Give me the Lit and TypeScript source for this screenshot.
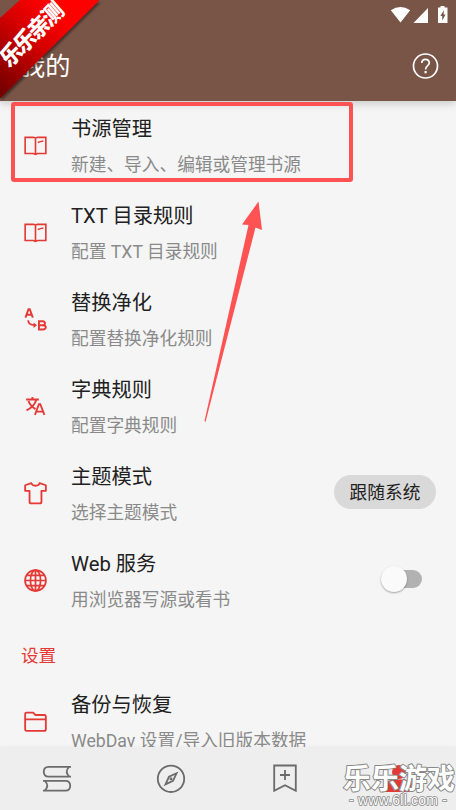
import { LitElement, html, svg, css, nothing } from "lit";
import { customElement, property } from "lit/decorators.js";

const icons: Record<string, unknown> = {
  book: svg`<path d="M12 4.2 10 3.5H1.2V20.3H9.8L12 21.3 14.2 20.3H22.8V3.5H14L12 4.2V21" fill="none" stroke="currentColor" stroke-width="1.7"/><path d="M14.4 8.8Q17 8 20.2 7.4" fill="none" stroke="currentColor" stroke-width="1.6"/>`,
  replace: svg`<path d="M1.5 10 4.7 1.2H6L9.2 10M3 7H7.8" fill="none" stroke="currentColor" stroke-width="2"/><path d="M4.3 12.8C4.5 16 7 17.9 11 17.9" fill="none" stroke="currentColor" stroke-width="1.8"/><path d="M10 15 13.6 17.9 10 20.8Z" fill="currentColor"/><path d="M15.6 13.9H19.4C23 13.9 22.5 18 19.5 18 23.8 18 23.7 22.4 19.8 22.4H15.6ZM16 18H20" fill="none" stroke="currentColor" stroke-width="2"/>`,
  translate: svg`<path d="M2.2 4.7H15.5M8.8 2V4.7M4.7 6.2C6.2 10.5 9 12.8 12 14.7M12.9 5C11.2 10.5 7 14 2.6 16" fill="none" stroke="currentColor" stroke-width="2"/><path d="M11.4 20.8 15.6 9.6H17L21.3 20.8M12.8 17.3H19.8" fill="none" stroke="currentColor" stroke-width="1.9"/>`,
  shirt: svg`<path d="M7.7 1.2 1.2 3.4V9.2H5.8V20.5Q5.8 22.3 7.6 22.3H16.4Q18.2 22.3 18.2 20.5V9.2H22.8V3.4L16.3 1.2C15.4 4.8 8.6 4.8 7.7 1.2Z" fill="none" stroke="currentColor" stroke-width="1.9" stroke-linejoin="round"/>`,
  globe: svg`<g fill="none" stroke="currentColor" stroke-width="1.8"><circle cx="12" cy="12" r="10.9"/><ellipse cx="12" cy="12" rx="5.3" ry="10.9"/><path d="M12 1V23M1 12H23M3 6.7H21M3 17.3H21"/></g>`,
  folder: svg`<path d="M1.2 20V4.2Q1.2 2.7 2.7 2.7H9.5L12 5.2H21.2Q22.8 5.2 22.8 6.8V20Q22.8 21.7 21.2 21.7H2.8Q1.2 21.7 1.2 20ZM1.2 9.7H22.8" fill="none" stroke="currentColor" stroke-width="1.9"/>`,
};

@customElement("setting-row")
class SettingRow extends LitElement {
  @property() icon = "";
  @property() label = "";
  @property() note = "";
  static styles = css`
    :host { display: flex; align-items: center; height: 87px; padding: 0 20px 0 24px; box-sizing: border-box; flex: none; }
    .icon { width: 23px; height: 23px; color: #e53935; flex: none; margin-top: 1px; }
    .text { flex: 1; margin-left: 24px; white-space: nowrap; }
    .label { font-size: 20.25px; line-height: 30px; margin-top: 1px; color: #212121; }
    .note { font-size: 17.7px; line-height: 26px; margin-top: 8px; margin-bottom: -1px; color: #8a8a8a; }
  `;
  render() {
    return html`<svg class="icon" viewBox="0 0 24 24">${icons[this.icon] ?? nothing}</svg>
      <div class="text"><div class="label">${this.label}</div><div class="note">${this.note}</div></div>
      <slot></slot>`;
  }
}

@customElement("app-root")
class AppRoot extends LitElement {
  static styles = css`
    :host { display: flex; flex-direction: column; position: relative; width: 456px; height: 810px; overflow: hidden; background: #f5f5f5; font-family: Roboto, "Noto Sans CJK SC", sans-serif; }
    header { height: 101px; flex: none; background: #795548; color: #fff; box-shadow: 0 2px 9px #0003; z-index: 1; }
    .status { height: 31px; display: flex; justify-content: flex-end; }
    .bar { height: 70px; display: flex; align-items: center; justify-content: space-between; padding: 0 17px 0 20px; }
    .title { font-size: 25.2px; line-height: 36px; padding-top: 2px; }
    main { flex: 1; min-height: 0; overflow: hidden; display: flex; flex-direction: column; }
    .section { height: 35px; padding: 16px 21px 0; font-size: 17.6px; line-height: 35px; color: #e53935; margin-bottom: 3px; flex: none; }
    .pill { width: 102px; height: 34px; border-radius: 17px; background: #d9d9d9; color: #212121; font-size: 17.7px; line-height: 36px; text-align: center; margin-bottom: 2px; }
    .switch { width: 38px; height: 18px; margin: 0 14px 2px 0; border-radius: 9px; background: #b2b2b2; display: flex; align-items: center; }
    .thumb { width: 26px; height: 26px; border-radius: 50%; background: #fafafa; box-shadow: 0 1px 2px #0005; margin-left: -3px; flex: none; }
    nav { height: 63px; flex: none; display: grid; grid-template-columns: repeat(4, 1fr); justify-items: center; align-items: center; background: #eee; box-shadow: 0 -1px 3px #00000008; color: #6b6b6b; z-index: 1; }
    nav svg { width: 30px; height: 30px; }
    .me { color: #e53935; }
    .ribbon { position: absolute; left: 0; top: 0; z-index: 3; width: 110px; height: 110px; }
    .ribbon text { font: 900 21.5px "Noto Sans CJK SC", sans-serif; fill: #fff; }
    .marks { position: absolute; left: 0; top: 0; z-index: 2; }
    .brand { position: absolute; right: 0; bottom: 0; z-index: 3; }
    .brand text { fill: #fff; stroke: #888; stroke-width: 1.6px; paint-order: stroke; stroke-linejoin: round; }
    .brand .name { font: 700 28px "Noto Sans CJK SC", sans-serif; stroke-width: 2px; }
    .brand .site { font: 14px "Liberation Sans", sans-serif; }
  `;
  render() {
    return html`
      <header>
        <div class="status">
          <svg width="66" height="31" viewBox="390 0 66 31" fill="#fff">
            <path d="M390.8 10.2Q400.5 3.7 410.2 10.2L400.5 22.4ZM428 8V23H413.5ZM440.5 7.5V6H444.5V7.5H447.5V23H438V7.5Z"/>
            <path d="M443.8 10.2 440.4 16H442.2V20.4L445.6 14.4H443.7Z" fill="#795548"/>
          </svg>
        </div>
        <div class="bar">
          <div class="title">我的</div>
          <svg width="27" height="27" viewBox="0 0 27 27" fill="none" stroke="#fff" stroke-width="1.7">
            <circle cx="13.5" cy="13" r="12"/><path d="M9.8 10.1C9.8 5.3 17.3 5.3 17.3 9.8 17.3 12.7 13.6 12.7 13.6 16.5"/><path d="M13.6 18V20.3" stroke-width="2.2"/>
          </svg>
        </div>
      </header>
      <main>
        <setting-row icon="book" label="书源管理" note="新建、导入、编辑或管理书源"></setting-row>
        <setting-row icon="book" label="TXT 目录规则" note="配置 TXT 目录规则"></setting-row>
        <setting-row icon="replace" label="替换净化" note="配置替换净化规则"></setting-row>
        <setting-row icon="translate" label="字典规则" note="配置字典规则"></setting-row>
        <setting-row icon="shirt" label="主题模式" note="选择主题模式"><div class="pill">跟随系统</div></setting-row>
        <setting-row icon="globe" label="Web 服务" note="用浏览器写源或看书"><div class="switch"><div class="thumb"></div></div></setting-row>
        <div class="section">设置</div>
        <setting-row icon="folder" label="备份与恢复" note="WebDav 设置/导入旧版本数据"></setting-row>
      </main>
      <nav>
        <svg viewBox="0 0 30 30" fill="none" stroke="currentColor" stroke-width="1.8"><path d="M29 2.8H6.5Q1.8 2.8 1.8 7.7T6.5 12.6H29M27 3Q22.5 7.7 27 12.4M1 16.8H23.5Q28.2 16.8 28.2 21.7T23.5 26.6H1M3 17Q7.5 21.7 3 26.4"/></svg>
        <svg viewBox="0 0 30 30" fill="none" stroke="currentColor" stroke-width="1.8"><circle cx="15" cy="14.8" r="13.2"/><path d="M20.5 9.3 17 16.8 9.5 20.3 13 12.8Z"/><circle cx="15" cy="14.8" r=".6"/></svg>
        <svg viewBox="0 0 30 30" fill="none" stroke="currentColor" stroke-width="1.8"><path d="M4.2 1.5H25.8V26.8L15 21.3 4.2 26.8ZM15 6V16M10 11H20"/></svg>
        <svg class="me" viewBox="0 0 30 30" fill="currentColor"><circle cx="15" cy="8" r="7"/><path d="M2 28V21Q2 16.5 9 15.5H21Q28 16.5 28 21V28Z"/></svg>
      </nav>
      <svg class="marks" width="456" height="440">
        <rect x="13" y="104" width="338" height="76" rx="1" fill="none" stroke="#ff5252" stroke-width="4"/>
        <path d="M258.5 201.5 262 230 255.5 227.5 205.5 422 204.5 421 248.5 225 242 224.5Z" fill="#ff5252"/>
      </svg>
      <svg class="ribbon">
        <defs>
          <linearGradient id="red" gradientUnits="userSpaceOnUse" x1="0" y1="90" x2="80" y2="0"><stop offset="0" stop-color="#760000"/><stop offset=".5" stop-color="#d40000"/><stop offset=".8" stop-color="#ff0000"/></linearGradient>
          <filter id="shade"><feDropShadow dx="1" dy="2" stdDeviation="1.8" flood-opacity=".55"/></filter>
        </defs>
        <path d="M20 0H99.5L0 98.5V18Z" fill="url(#red)" filter="url(#shade)"/>
        <text transform="translate(9 68.5) rotate(-45) skewX(-4) scale(1 1.05)" textLength="80">乐乐亲测</text>
      </svg>
      <svg class="brand" width="120" height="52" viewBox="336 758 120 52">
        <text class="name" x="343" y="788.5" textLength="112">乐乐游戏</text>
        <text class="site" x="349" y="805" textLength="98">- www.6ll.com -</text>
      </svg>
    `;
  }
}
